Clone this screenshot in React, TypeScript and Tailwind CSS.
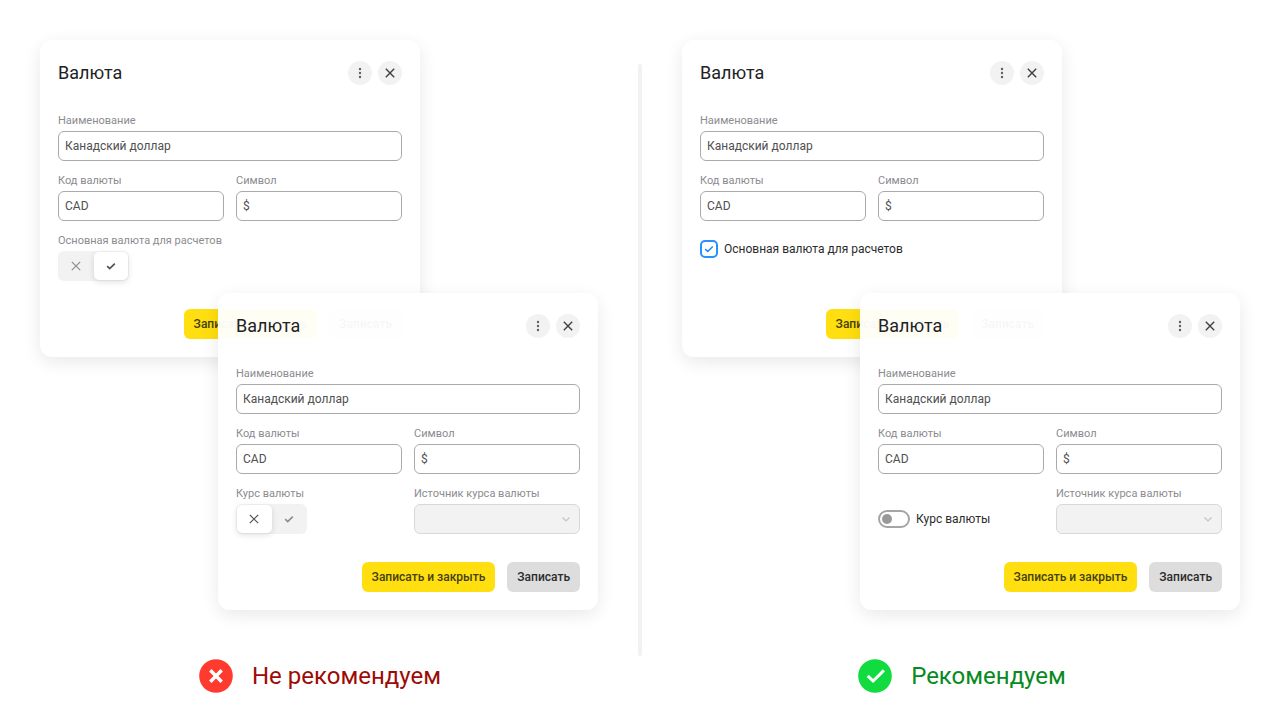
import React, { useId } from "react";

interface FieldProps {
    label: string;
    value: string;
}

interface SegmentedProps {
    label: string;
    value: "no" | "yes";
}

interface CurrencyCardProps {
    className?: string;
    children: React.ReactNode;
}

const CrossIcon: React.FC<{ className?: string }> = ({ className }) => (
    <svg className={className} width="12" height="12" viewBox="0 0 12 12" fill="none" stroke="currentColor" aria-hidden="true">
        <path d="M1.8 1.8l8.4 8.4M10.2 1.8l-8.4 8.4" />
    </svg>
);

const CheckIcon: React.FC<{ className?: string }> = ({ className }) => (
    <svg className={className} width="12" height="12" viewBox="0 0 12 12" fill="none" stroke="currentColor" aria-hidden="true">
        <path d="M2.2 6.1l2.5 2.5 5.1-5" />
    </svg>
);

const labelClass = "text-[11px] leading-4 text-[#8b8b90]";

const Field: React.FC<FieldProps> = ({ label, value }) => {
    const id = useId();
    return (
        <div className="flex min-w-0 flex-col gap-0.5">
            <label htmlFor={id} className={labelClass}>{label}</label>
            <input
                id={id}
                type="text"
                defaultValue={value}
                className="h-[30px] w-full rounded-md border border-[#aaaaaa] bg-white px-1.5 pb-px text-xs text-[#505050]"
            />
        </div>
    );
};

const SourceSelect: React.FC = () => {
    const id = useId();
    return (
        <div className="flex min-w-0 flex-col gap-0.5">
            <label htmlFor={id} className={labelClass}>Источник курса валюты</label>
            <div className="relative">
                <select id={id} disabled className="block h-[30px] w-full appearance-none rounded-md border border-[#d8d8d8] bg-[#f2f2f2]" />
                <svg className="absolute top-[9px] right-2 text-[#c4c4c4]" width="12" height="12" viewBox="0 0 12 12" fill="none" stroke="currentColor" strokeWidth="1.2" aria-hidden="true">
                    <path d="M2.5 4.5L6 8l3.5-3.5" />
                </svg>
            </div>
        </div>
    );
};

const Segmented: React.FC<SegmentedProps> = ({ label, value }) => {
    const name = useId();
    const option = "relative flex flex-1 items-center justify-center rounded-[5px] text-[#8c8c8c] has-checked:bg-white has-checked:text-[#505050] has-checked:shadow-[0_2px_6px_rgba(0,0,0,0.12)]";
    return (
        <fieldset className="flex flex-col gap-0.5">
            <legend className="contents">
                <span className={labelClass}>{label}</span>
            </legend>
            <div className="flex h-[30px] w-[71px] rounded-md bg-[#f2f2f2] p-px">
                <label className={option}>
                    <input type="radio" name={name} defaultChecked={value === "no"} aria-label="Нет" className="sr-only" />
                    <CrossIcon className="stroke-[1.2]" />
                </label>
                <label className={option}>
                    <input type="radio" name={name} defaultChecked={value === "yes"} aria-label="Да" className="sr-only" />
                    <CheckIcon className="stroke-[1.6]" />
                </label>
            </div>
        </fieldset>
    );
};

const MainCurrencyCheckbox: React.FC = () => (
    <label className="flex h-12 items-start gap-1.5 pt-[7px] text-xs leading-[18px] text-[#2b2b2b]">
        <span className="relative">
            <input
                type="checkbox"
                defaultChecked
                className="peer block size-[18px] appearance-none rounded-[5px] border-2 border-[#2a90ff] bg-white"
            />
            <CheckIcon className="pointer-events-none absolute top-[3px] left-[3px] hidden stroke-[1.4] text-[#1485ff] peer-checked:block" />
        </span>
        Основная валюта для расчетов
    </label>
);

const RateSwitch: React.FC = () => (
    <label className="flex h-[30px] items-center gap-1.5 self-end text-xs text-[#2b2b2b]">
        <input
            type="checkbox"
            role="switch"
            className="flex h-[18px] w-8 appearance-none items-center rounded-full border-2 border-[#a5a5a5] bg-white px-0.5 before:size-[10px] before:rounded-full before:bg-[#999999] before:content-[''] checked:justify-end"
        />
        Курс валюты
    </label>
);

const CurrencyCard: React.FC<CurrencyCardProps> = ({ className = "", children }) => (
    <section className={`w-[380px] max-w-full rounded-xl px-[18px] pt-[21px] pb-[18px] shadow-[0_5px_18px_rgba(0,0,0,0.09)] ${className}`}>
        <header className="flex h-6 items-center gap-1.5">
            <h2 className="mr-auto text-lg text-[#222222]">Валюта</h2>
            <button type="button" aria-label="Ещё" className="flex size-6 items-center justify-center rounded-full bg-[#f2f2f2] text-[#606060]">
                <svg width="12" height="12" viewBox="0 0 12 12" fill="currentColor" aria-hidden="true">
                    <circle cx="6" cy="2" r="1.2" />
                    <circle cx="6" cy="6" r="1.2" />
                    <circle cx="6" cy="10" r="1.2" />
                </svg>
            </button>
            <button type="button" aria-label="Закрыть" className="flex size-6 items-center justify-center rounded-full bg-[#f2f2f2] text-[#404040]">
                <CrossIcon className="stroke-[1.4]" />
            </button>
        </header>
        <div className="mt-7 grid grid-cols-2 gap-x-3 gap-y-3">
            <div className="col-span-2">
                <Field label="Наименование" value="Канадский доллар" />
            </div>
            <Field label="Код валюты" value="CAD" />
            <Field label="Символ" value="$" />
            {children}
        </div>
        <footer className="mt-7 flex justify-end gap-3 text-xs font-medium">
            <button type="button" className="h-[30px] rounded-md bg-[#ffdf0f] px-2.5 text-[#45400f]">Записать и закрыть</button>
            <button type="button" className="h-[30px] rounded-md bg-[#dddddd] px-2.5 text-[#2b2b2b]">Записать</button>
        </footer>
    </section>
);

const BadExample: React.FC = () => (
    <article className="flex flex-1 flex-col">
        <CurrencyCard className="bg-white">
            <div className="col-span-2">
                <Segmented label="Основная валюта для расчетов" value="yes" />
            </div>
        </CurrencyCard>
        <CurrencyCard className="z-10 -mt-16 self-end bg-white/96">
            <Segmented label="Курс валюты" value="no" />
            <SourceSelect />
        </CurrencyCard>
        <p className="mt-12 flex h-9 items-center justify-center gap-[19px] pl-0.5 text-2xl text-[#9c0c06]">
            <svg width="34" height="34" viewBox="0 0 34 34" fill="none" aria-hidden="true">
                <circle cx="17" cy="17" r="16.8" fill="#ff3b30" />
                <path d="M11.3 11.3l11.4 11.4M22.7 11.3l-11.4 11.4" stroke="#fff" strokeWidth="3.4" />
            </svg>
            Не рекомендуем
        </p>
    </article>
);

const GoodExample: React.FC = () => (
    <article className="flex flex-1 flex-col">
        <CurrencyCard className="bg-white">
            <div className="col-span-2">
                <MainCurrencyCheckbox />
            </div>
        </CurrencyCard>
        <CurrencyCard className="z-10 -mt-16 self-end bg-white/96">
            <RateSwitch />
            <SourceSelect />
        </CurrencyCard>
        <p className="mt-12 flex h-9 items-center justify-center gap-[19px] pl-0.5 text-2xl text-[#078a20]">
            <svg width="34" height="34" viewBox="0 0 34 34" fill="none" aria-hidden="true">
                <circle cx="17" cy="17" r="16.8" fill="#10dc40" />
                <path d="M9.7 16.8l5.4 5.2 10.8-10.6" stroke="#fff" strokeWidth="3" />
            </svg>
            Рекомендуем
        </p>
    </article>
);

export default function App() {
    return (
        <main className="flex min-h-screen gap-10 bg-white px-10 font-['Roboto',sans-serif]">
            <div className="flex flex-1 pt-10 pb-6">
                <BadExample />
            </div>
            <div className="my-16 w-1 rounded-full bg-[#f2f2f2]" />
            <div className="flex flex-1 pt-10 pb-6">
                <GoodExample />
            </div>
        </main>
    );
}
